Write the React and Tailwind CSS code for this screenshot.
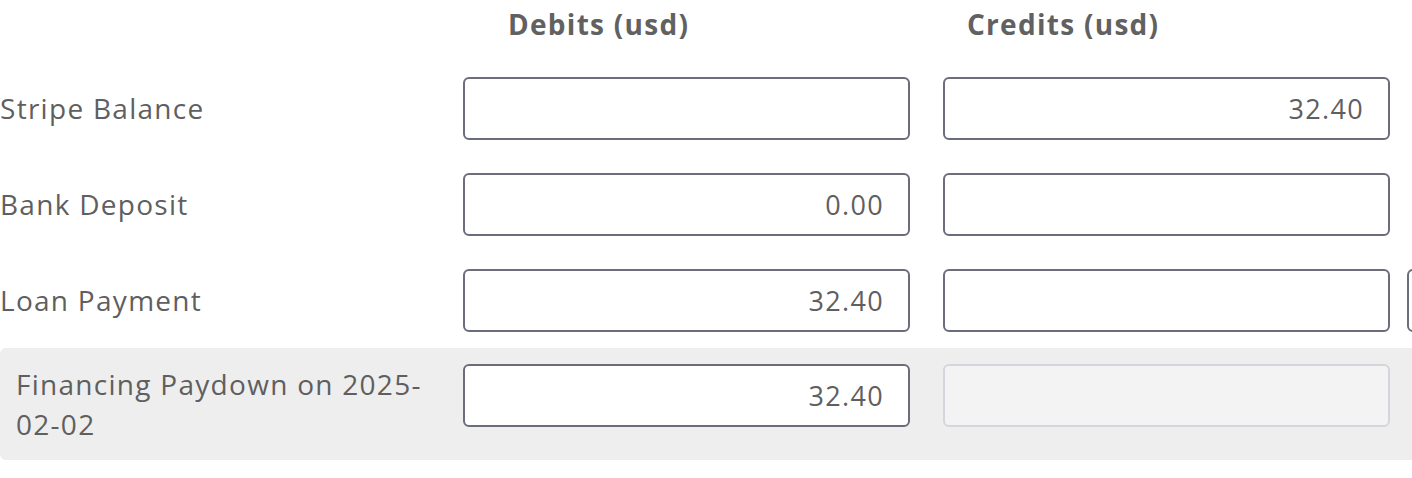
import React from "react";

const rows = [
  { label: "Stripe Balance", debit: "", credit: "32.40", extra: false },
  { label: "Bank Deposit", debit: "0.00", credit: "", extra: false },
  { label: "Loan Payment", debit: "32.40", credit: "", extra: true },
];

const font = { fontFamily: '"Open Sans", "Liberation Sans", sans-serif' };

const Field = ({ value, disabled }) => (
  <input
    readOnly
    disabled={disabled}
    value={value}
    className={
      disabled
        ? "w-[447px] h-[63px] shrink-0 rounded-md border-2 border-[#d4d6db] bg-[#f3f3f3] px-6 text-right text-[27px] tracking-[0.05em] text-[#5f5f5f] outline-none"
        : "w-[447px] h-[63px] shrink-0 rounded-md border-2 border-[#6b6e7a] bg-white px-6 text-right text-[27px] tracking-[0.05em] text-[#5f5f5f] outline-none"
    }
    style={font}
  />
);

export default function App() {
  return (
    <div className="w-[1412px] h-[478px] overflow-hidden bg-white text-[#5f5f5f] tracking-[0.08em]" style={font}>
      <div className="flex h-[60px] items-start pt-[3px]">
        <div className="w-[463px] shrink-0" />
        <div className="w-[447px] shrink-0 pl-[45px] text-[28px] font-bold text-[#616161]">Debits (usd)</div>
        <div className="w-[33px] shrink-0" />
        <div className="w-[447px] shrink-0 pl-[24px] text-[28px] font-bold text-[#616161]">Credits (usd)</div>
      </div>

      {rows.map((r, i) => (
        <div key={i} className="flex h-[96px] items-center">
          <div className="w-[463px] shrink-0 text-[28px]">{r.label}</div>
          <Field value={r.debit} />
          <div className="w-[33px] shrink-0" />
          <Field value={r.credit} />
          <div className="w-[17px] shrink-0" />
          {r.extra && <Field value="" />}
        </div>
      ))}

      <div className="flex h-[112px] w-[1440px] items-start rounded-l-md bg-[#eeeeee] py-4 pl-4">
        <div className="w-[447px] shrink-0 pr-4 text-[28px] leading-[40px]">Financing Paydown on 2025-02-02</div>
        <Field value="32.40" />
        <div className="w-[33px] shrink-0" />
        <Field value="" disabled />
      </div>
    </div>
  );
}
